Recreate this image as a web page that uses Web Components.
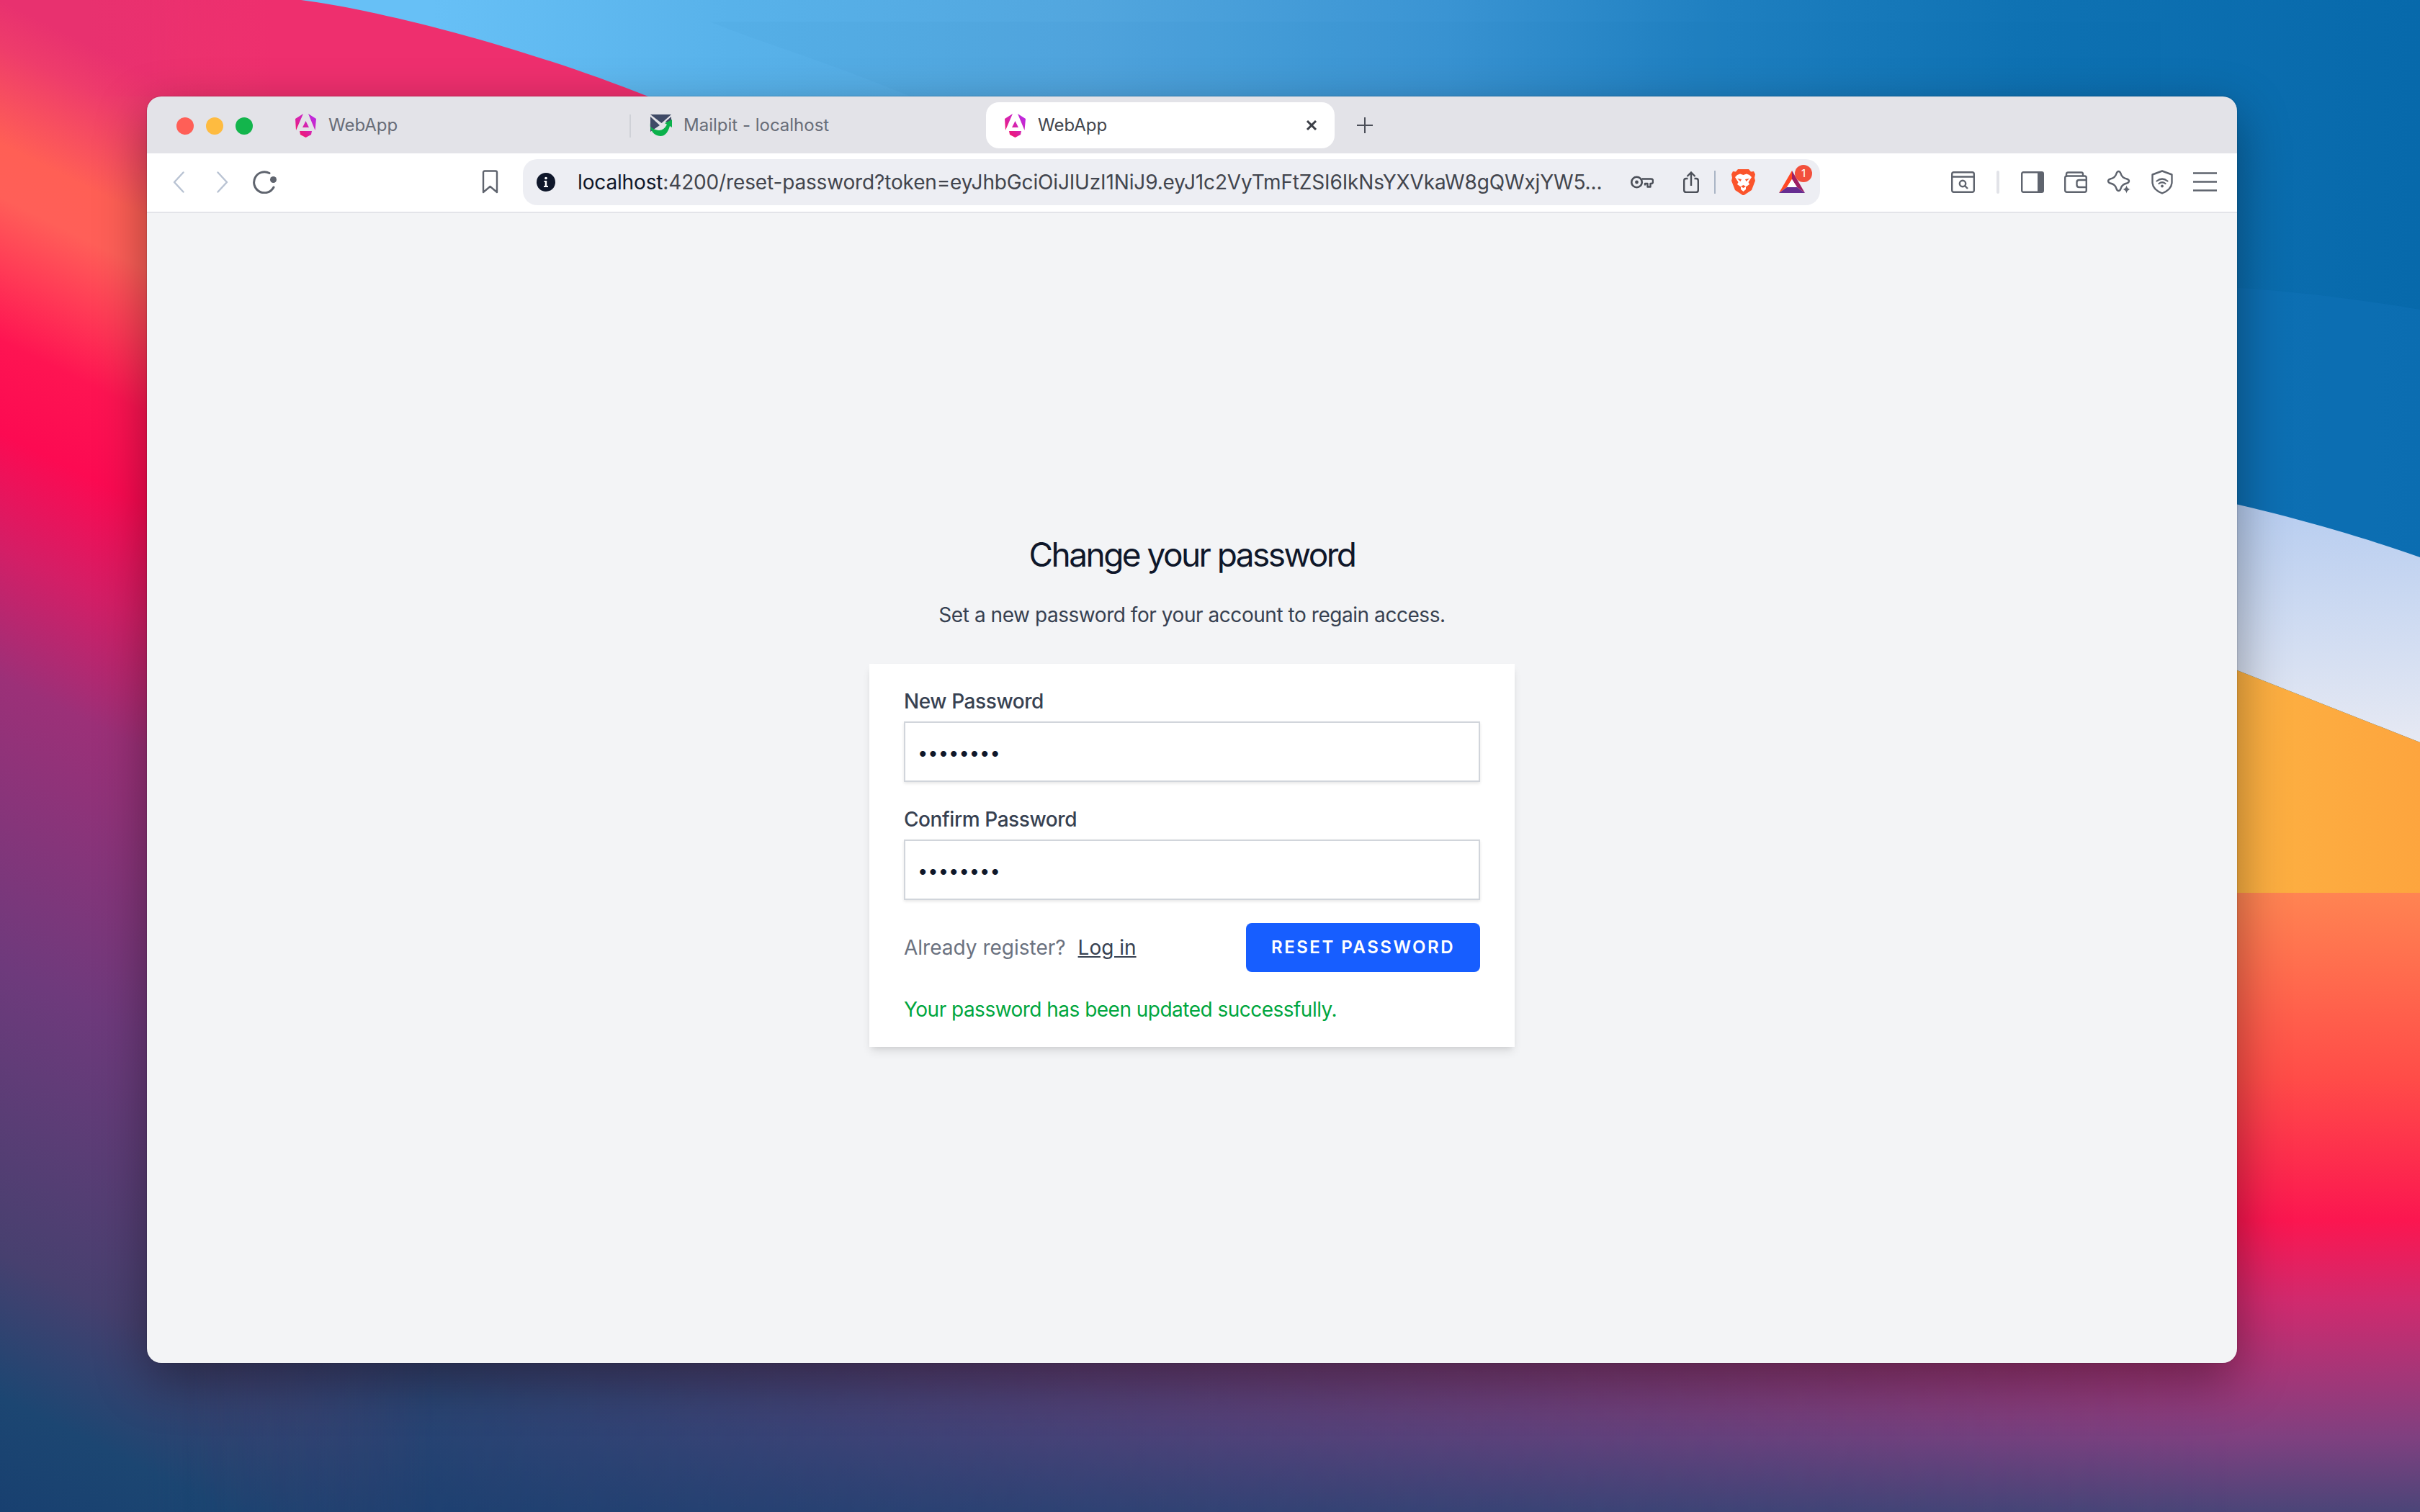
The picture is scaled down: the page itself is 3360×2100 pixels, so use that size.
<!doctype html>
<html lang="en">
<head>
<meta charset="utf-8">
<title>Change your password</title>
<style>
html, body { margin: 0; padding: 0; }
body { width: 3360px; height: 2100px; overflow: hidden; font-family: Inter, "Liberation Sans", sans-serif; }
</style>
</head>
<body>
<mac-desktop>
	<browser-window>
		<browser-tab slot="tabs" icon="angular" width="492">WebApp</browser-tab>
		<browser-tab slot="tabs" icon="mailpit" width="494" sep>Mailpit - localhost</browser-tab>
		<browser-tab slot="tabs" icon="angular" width="484" active>WebApp</browser-tab>
		<browser-toolbar slot="toolbar"><b>localhost</b>:4200/reset-password?token=eyJhbGciOiJIUzI1NiJ9.eyJ1c2VyTmFtZSI6IkNsYXVkaW8gQWxjYW5...</browser-toolbar>
		<reset-page>
			<reset-card>
				<pass-field label="New Password"></pass-field>
				<pass-field label="Confirm Password"></pass-field>
				<reset-actions></reset-actions>
				<span slot="status">Your password has been updated successfully.</span>
			</reset-card>
		</reset-page>
	</browser-window>
</mac-desktop>

<script>
const html = (strings, ...parts) => {
	const tpl = document.createElement('template')
	tpl.innerHTML = parts.reduce((out, value, i) => `${out}${strings[i]}${value}`, '') + strings[parts.length]
	return tpl
}

const stroke = '#5f646e'
const icons = {
	back: [16, 30, `<path d="M14.500 1.500 2 15l12.500 13.500" fill="none" stroke="#b9c3d3" stroke-width="2.400" stroke-linecap="round" stroke-linejoin="round"/>`],
	forward: [16, 30, `<path d="M1.500 1.500 14 15 1.500 28.500" fill="none" stroke="#b9c3d3" stroke-width="2.400" stroke-linecap="round" stroke-linejoin="round"/>`],
	reload: [34, 32, `<path d="M24 3.500A14.500 14.500 0 1 0 30 23" fill="none" stroke="${stroke}" stroke-width="3" stroke-linecap="round"/><circle cx="29.500" cy="12.500" r="4.500" fill="${stroke}"/>`],
	bookmark: [23, 33, `<path d="M2 3.500Q2 1.500 4 1.500H19Q21 1.500 21 3.500V31L11.500 23 2 31Z" fill="none" stroke="${stroke}" stroke-width="2.400" stroke-linejoin="round"/>`],
	info: [26, 26, `<circle cx="13" cy="13" r="13" fill="#0f172a"/><circle cx="13" cy="7.500" r="1.800" fill="#fff"/><path d="M10.500 11h3.700v7H16v2h-6v-2h1.700v-5h-1.200z" fill="#fff"/>`],
	key: [32, 18, `<circle cx="8.500" cy="9" r="7.200" fill="none" stroke="#4b4f58" stroke-width="2.600"/><circle cx="8.500" cy="9" r="2.400" fill="#4b4f58"/><path d="M15.500 4.500H28.500Q31 4.500 31 7V8.500Q31 11 28.500 11H27.500V15.500H23.500V11H20V13.500" fill="none" stroke="#4b4f58" stroke-width="2.400" stroke-linejoin="round"/>`],
	share: [22, 30, `<path d="M6.500 10H4Q1.200 10 1.200 13V26Q1.200 29 4 29H18Q20.800 29 20.800 26V13Q20.800 10 18 10H15.500" fill="none" stroke="#4b4f58" stroke-width="2.400"/><path d="M11 20V2M5.500 7 11 1.500 16.500 7" fill="none" stroke="#4b4f58" stroke-width="2.400"/>`],
	brave: [33, 36, `<path d="M9 0H24L27 3.500 31 3 33 7 32 12 33 16 28 29 17.500 36H15.500L5 29 0 16 1 12 0 7 2 3 6 3.500Z" fill="#fb542b"/><path d="M8 8 12 6.500 16.500 8 21 6.500 25 8 28 11 25.500 15 23.500 18 25 21 20 24.500 20 28 16.500 31 13 28 13 24.500 8 21 9.500 18 7.500 15 5 11Z" fill="#fff"/><path d="M8 13 14 14 12.500 17ZM25 13 19 14 20.500 17ZM13 24 16.500 22 20 24 16.500 26Z" fill="#fb542b"/>`],
	bat: [36, 31, `<path d="M18 0 0 31 11 23 18 12Z" fill="#ff4724"/><path d="M18 0 36 31 25 23 18 12Z" fill="#9e1f63"/><path d="M0 31H36L25 23H11Z" fill="#662d91"/><path d="M18 12 25 23H11Z" fill="#fff"/>`],
	reader: [33, 30, `<rect x="1.200" y="1.200" width="30.600" height="27.600" rx="2.500" fill="none" stroke="${stroke}" stroke-width="2.400"/><path d="M1.500 7.500H31.500" stroke="${stroke}" stroke-width="2.400"/><circle cx="16" cy="17" r="4.200" fill="none" stroke="${stroke}" stroke-width="2.400"/><path d="M19 20l4 4" stroke="${stroke}" stroke-width="2.400"/>`],
	sidebar: [32, 30, `<rect x="1.200" y="1.200" width="29.600" height="27.600" rx="2" fill="none" stroke="${stroke}" stroke-width="2.400"/><path d="M23 1.500H29Q31 1.500 31 3.500V26.500Q31 28.500 29 28.500H23Z" fill="${stroke}"/>`],
	wallet: [32, 30, `<path d="M3 8V4Q3 1.500 5.500 1.500H24Q26 1.500 26 4V6.500" fill="none" stroke="${stroke}" stroke-width="2.400"/><rect x="1.200" y="6.500" width="29.600" height="22.300" rx="2.500" fill="none" stroke="${stroke}" stroke-width="2.400"/><path d="M31 12H21Q17.500 12 17.500 15V19Q17.500 22 21 22H31" fill="none" stroke="${stroke}" stroke-width="2.400"/>`],
	sparkle: [32, 33, `<path d="M15.500 2Q17.500 2 18.500 5 20 11 27 12.500 30 13.500 30 15.500 30 17.500 27 18.500 20 20 18.500 26 17.500 29 15.500 29 13.500 29 12.500 26 11 20 4 18.500 1 17.500 1 15.500 1 13.500 4 12.500 11 11 12.500 5 13.500 2 15.500 2Z" fill="none" stroke="${stroke}" stroke-width="2.400" stroke-linejoin="round"/><path d="M26.500 21Q27.300 26 32 27 27.300 28 26.500 33 25.700 28 21 27 25.700 26 26.500 21Z" fill="${stroke}" stroke="#fff" stroke-width=".6"/>`],
	shield: [30, 34, `<path d="M15 1.500 28.500 6.500V17Q28.500 27 15 32.500 1.500 27 1.500 17V6.500Z" fill="none" stroke="${stroke}" stroke-width="2.400" stroke-linejoin="round"/><path d="M7.500 15.500Q15 9.500 22.500 15.500M10.500 19Q15 15.500 19.500 19" fill="none" stroke="${stroke}" stroke-width="2.200" stroke-linecap="round"/><circle cx="15" cy="22.500" r="1.900" fill="${stroke}"/>`],
	menu: [33, 27, `<path d="M0 1.500H33M0 13.500H33M0 25.500H33" stroke="${stroke}" stroke-width="2.600"/>`],
	angular: [31, 33, `<defs><linearGradient id="ng" x1="1" y1="0" x2="0" y2="1"><stop offset="0" stop-color="#b52bf0"/><stop offset=".55" stop-color="#d923a8"/><stop offset="1" stop-color="#ff0f4d"/></linearGradient></defs><path d="M12 0 1 7 2 23ZM19 0 30 7 28.500 23ZM15.500 10 11 19H20ZM7 24H24L23 29 15.500 33 8 29Z" fill="url(#ng)"/>`],
	mailpit: [33, 33, `<path d="M2 1H31L17.500 13Z" fill="#3f4a66"/><path d="M2 4 15 16 2 25ZM31 4V14L23 11Z" fill="#3f4a66"/><path d="M1 12Q2 30 16 31 25 31 29 17L32 19 32 8 22 13 25 15Q20 24 13 23 6 22 2 18Z" fill="#0bb14b"/>`]
}

const uiIcon = html`<style>
:host { display: inline-flex; flex: none; }
svg { display: block; }
</style><span id="box"></span>`

class UiIcon extends HTMLElement {
	static observedAttributes = ['name']

	constructor() {
		super()
		this.attachShadow({mode: 'open'}).append(uiIcon.content.cloneNode(true))
	}

	attributeChangedCallback(attr, old, name) {
		const [w, h, body] = icons[name]
		this.shadowRoot.getElementById('box').innerHTML = `<svg width="${w}" height="${h}" viewBox="0 0 ${w} ${h}">${body}</svg>`
	}
}
customElements.define('ui-icon', UiIcon)

const desktop = html`<style>
:host {
	display: flex;
	position: relative;
	box-sizing: border-box;
	width: 3360px;
	height: 2100px;
	padding: 134px 254px 207px 204px;
	overflow: hidden;
}
#wall { position: absolute; inset: 0; }
::slotted(*) { position: relative; }
</style>
<svg id="wall" width="3360" height="2100" viewBox="0 0 3360 2100">
	<defs>
		<linearGradient id="sunset" x1="0" y1="0" x2="0" y2="2100" gradientUnits="userSpaceOnUse">
			<stop offset="0" stop-color="#e8316f"/>
			<stop offset=".03" stop-color="#ee3c6b"/>
			<stop offset=".095" stop-color="#ff5f55"/>
			<stop offset=".13" stop-color="#ff5f58"/>
			<stop offset=".175" stop-color="#ff3c56"/>
			<stop offset=".225" stop-color="#fe1452"/>
			<stop offset=".286" stop-color="#fc0a52"/>
			<stop offset=".362" stop-color="#d41e66"/>
			<stop offset=".448" stop-color="#9c3078"/>
			<stop offset=".638" stop-color="#6e3a7c"/>
			<stop offset=".829" stop-color="#47406f"/>
			<stop offset=".924" stop-color="#1c4672"/>
			<stop offset="1" stop-color="#184070"/>
		</linearGradient>
		<linearGradient id="sunsetTilt" href="#sunset" x1="0" y1="0" x2="-840" y2="1680"/>
		<linearGradient id="stripFade" x1="204" y1="0" x2="600" y2="0" gradientUnits="userSpaceOnUse">
			<stop offset="0" stop-color="#fff"/>
			<stop offset="1" stop-color="#000"/>
		</linearGradient>
		<mask id="stripMask" maskUnits="userSpaceOnUse" x="0" y="0" width="3360" height="2100">
			<rect width="3360" height="2100" fill="url(#stripFade)"/>
		</mask>
		<linearGradient id="pink" x1="120" y1="0" x2="380" y2="0" gradientUnits="userSpaceOnUse">
			<stop offset="0" stop-color="#ee2f6e" stop-opacity="0"/>
			<stop offset="1" stop-color="#ee2f6e"/>
		</linearGradient>
		<linearGradient id="sky" x1="600" y1="0" x2="3360" y2="0" gradientUnits="userSpaceOnUse">
			<stop offset="0" stop-color="#67c0f6"/>
			<stop offset=".15" stop-color="#58b2ea"/>
			<stop offset=".33" stop-color="#52a6de"/>
			<stop offset=".51" stop-color="#3a94d3"/>
			<stop offset=".65" stop-color="#1e7fc0"/>
			<stop offset=".8" stop-color="#0f72b3"/>
			<stop offset="1" stop-color="#0769ab"/>
		</linearGradient>
		<linearGradient id="ice" x1="0" y1="700" x2="0" y2="1030" gradientUnits="userSpaceOnUse">
			<stop offset="0" stop-color="#b7cdf0"/>
			<stop offset="1" stop-color="#e6e9f3"/>
		</linearGradient>
		<linearGradient id="amber" x1="3106" y1="0" x2="3360" y2="0" gradientUnits="userSpaceOnUse">
			<stop offset="0" stop-color="#fdb142"/>
			<stop offset="1" stop-color="#fda53e"/>
		</linearGradient>
		<linearGradient id="ember" x1="0" y1="1240" x2="0" y2="2100" gradientUnits="userSpaceOnUse">
			<stop offset="0" stop-color="#ff8452"/>
			<stop offset=".3" stop-color="#ff4c48"/>
			<stop offset=".53" stop-color="#fb1650"/>
			<stop offset=".66" stop-color="#d02a6e"/>
			<stop offset=".88" stop-color="#7f4080"/>
			<stop offset="1" stop-color="#4b4578"/>
		</linearGradient>
		<linearGradient id="fadeRight" x1="250" y1="0" x2="3106" y2="0" gradientUnits="userSpaceOnUse">
			<stop offset="0" stop-color="#000"/>
			<stop offset="1" stop-color="#fff"/>
		</linearGradient>
		<mask id="emberMask" maskUnits="userSpaceOnUse" x="0" y="0" width="3360" height="2100">
			<rect width="3360" height="2100" fill="url(#fadeRight)"/>
		</mask>
	</defs>
	<rect width="3360" height="2100" fill="url(#sunset)"/>
	<rect width="600" height="2100" fill="url(#sunsetTilt)" mask="url(#stripMask)"/>
	<rect width="900" height="134" fill="url(#pink)"/>
	<path d="M418 0C540 16 740 70 900 134V1100H3360V0Z" fill="url(#sky)"/>
	<path d="M985 30C1060 60 1160 90 1264 134H3000V30Z" fill="#0a5c9c" opacity=".03"/>
	<path d="M3000 395C3150 398 3270 415 3360 430V800H3000Z" fill="#1072b8" opacity=".5"/>
	<path d="M3000 680C3100 695 3250 735 3360 774V1031L3000 889Z" fill="url(#ice)"/>
	<path d="M3000 889 3360 1031V1245L3000 1239Z" fill="url(#amber)"/>
	<rect x="204" y="1240" width="3156" height="860" fill="url(#ember)" mask="url(#emberMask)"/>
</svg>
<slot></slot>`

class MacDesktop extends HTMLElement {
	constructor() {
		super()
		this.attachShadow({mode: 'open'}).append(desktop.content.cloneNode(true))
	}
}
customElements.define('mac-desktop', MacDesktop)

const browserWindow = html`<style>
:host {
	display: flex;
	flex: 1;
	flex-direction: column;
	min-width: 0;
	border-radius: 20px;
	overflow: hidden;
	box-shadow: 0 24px 70px rgba(0, 0, 0, .38), 0 0 2px rgba(0, 0, 0, .3);
}
header {
	display: flex;
	align-items: flex-start;
	flex: none;
	box-sizing: border-box;
	height: 79px;
	padding: 8px 0 0 41px;
	background: #e3e3e8;
}
#lights {
	display: flex;
	gap: 17px;
	margin: 21px 32px 0 0;
}
#lights i { width: 24px; height: 24px; border-radius: 50%; }
#plus { margin: 18px 0 0 28px; width: 28px; height: 28px; }
</style>
<header>
	<div id="lights">
		<i style="background:#ff5f57"></i><i style="background:#febb40"></i><i style="background:#13b54c"></i>
	</div>
	<slot name="tabs"></slot>
	<svg id="plus" viewBox="0 0 28 28"><path d="M14 3V25M3 14H25" stroke="#4b4f58" stroke-width="2"/></svg>
</header>
<slot name="toolbar"></slot>
<slot></slot>`

class BrowserWindow extends HTMLElement {
	constructor() {
		super()
		this.attachShadow({mode: 'open'}).append(browserWindow.content.cloneNode(true))
	}
}
customElements.define('browser-window', BrowserWindow)

const tab = html`<style>
:host {
	display: flex;
	align-items: center;
	position: relative;
	flex: none;
	box-sizing: border-box;
	height: 64px;
	padding-left: 26px;
	font: 400 24px/1 Inter, "Liberation Sans", sans-serif;
	color: #686d78;
	gap: 16px;
}
:host([active]) {
	padding-left: 25px;
	background: #fff;
	border-radius: 18px;
	color: #43464e;
}
:host([sep]) { gap: 15px; }
:host([sep])::before {
	content: '';
	position: absolute;
	left: -1px;
	top: 17px;
	width: 2px;
	height: 32px;
	background: #cfd1d7;
}
#close {
	display: none;
	position: absolute;
	right: 24px;
	top: 25px;
}
:host([active]) #close { display: block; }
</style>
<ui-icon id="icon"></ui-icon>
<slot></slot>
<svg id="close" width="16" height="14" viewBox="0 0 16 14"><path d="M2 1 14 13M14 1 2 13" stroke="#3c3f47" stroke-width="3"/></svg>`

class BrowserTab extends HTMLElement {
	constructor() {
		super()
		this.attachShadow({mode: 'open'}).append(tab.content.cloneNode(true))
	}

	connectedCallback() {
		this.shadowRoot.getElementById('icon').setAttribute('name', this.getAttribute('icon'))
		this.style.width = `${this.getAttribute('width')}px`
	}
}
customElements.define('browser-tab', BrowserTab)

const toolbar = html`<style>
:host {
	display: flex;
	align-items: center;
	flex: none;
	box-sizing: border-box;
	height: 83px;
	padding: 0 28px 2px 36px;
	background: #fff;
	border-bottom: 2px solid #e3e4e9;
}
#forward { margin-left: 45px; }
#reload { margin-left: 33px; }
#bookmark { margin-left: 285px; }
#url {
	display: flex;
	align-items: center;
	flex: none;
	box-sizing: border-box;
	width: 1801px;
	height: 64px;
	margin-left: 34px;
	padding: 0 21px 0 19px;
	border-radius: 20px;
	background: #edeef3;
}
#text {
	flex: 1;
	min-width: 0;
	margin-left: 31px;
	padding-top: 2px;
	white-space: nowrap;
	overflow: hidden;
	font: 400 28px/1.2 Inter, "Liberation Sans", sans-serif;
	letter-spacing: -.15px;
	color: #42454d;
}
::slotted(b) { font-weight: 400; color: #0f172a; }
#key { margin-left: 30px; }
#share { margin-left: 41px; }
.bar { flex: none; width: 2px; height: 32px; margin-left: 21px; background: #aab5c5; }
#brave { margin-left: 22px; }
#badge-wrap { position: relative; display: flex; margin-left: 33px; }
#badge {
	position: absolute;
	top: -8px;
	right: -10px;
	box-sizing: border-box;
	width: 24px;
	height: 24px;
	border-radius: 50%;
	background: #f2503c;
	color: #fff;
	font: 400 15px/24px Inter, "Liberation Sans", sans-serif;
	text-align: center;
}
#reader { margin-left: 182px; }
#split { flex: none; width: 4px; height: 32px; margin: 0 30px; border-radius: 2px; background: #e2e3e8; }
#wallet, #sparkle { margin-left: 28px; }
#shield { margin-left: 29px; }
#menu { margin-left: 28px; }
</style>
<ui-icon name="back"></ui-icon>
<ui-icon id="forward" name="forward"></ui-icon>
<ui-icon id="reload" name="reload"></ui-icon>
<ui-icon id="bookmark" name="bookmark"></ui-icon>
<div id="url">
	<ui-icon name="info"></ui-icon>
	<div id="text"><slot></slot></div>
	<ui-icon id="key" name="key"></ui-icon>
	<ui-icon id="share" name="share"></ui-icon>
	<div class="bar"></div>
	<ui-icon id="brave" name="brave"></ui-icon>
	<div id="badge-wrap"><ui-icon name="bat"></ui-icon><div id="badge">1</div></div>
</div>
<ui-icon id="reader" name="reader"></ui-icon>
<div id="split"></div>
<ui-icon name="sidebar"></ui-icon>
<ui-icon id="wallet" name="wallet"></ui-icon>
<ui-icon id="sparkle" name="sparkle"></ui-icon>
<ui-icon id="shield" name="shield"></ui-icon>
<ui-icon id="menu" name="menu"></ui-icon>`

class BrowserToolbar extends HTMLElement {
	constructor() {
		super()
		this.attachShadow({mode: 'open'}).append(toolbar.content.cloneNode(true))
	}
}
customElements.define('browser-toolbar', BrowserToolbar)

const page = html`<style>
:host {
	display: flex;
	flex: 1;
	flex-direction: column;
	align-items: center;
	justify-content: center;
	padding-top: 3px;
	background: #f3f4f6;
	font-family: Inter, "Liberation Sans", sans-serif;
}
h1 {
	margin: 0;
	font-size: 46px;
	line-height: 64px;
	font-weight: 400;
	letter-spacing: -2.550px;
	color: #0f172a;
}
p {
	margin: 32px 0 48px;
	font-size: 28px;
	line-height: 40px;
	letter-spacing: -.45px;
	color: #374151;
}
</style>
<h1>Change your password</h1>
<p>Set a new password for your account to regain access.</p>
<slot></slot>`

class ResetPage extends HTMLElement {
	constructor() {
		super()
		this.attachShadow({mode: 'open'}).append(page.content.cloneNode(true))
	}
}
customElements.define('reset-page', ResetPage)

const card = html`<style>
:host {
	display: flex;
	flex-direction: column;
	gap: 32px;
	box-sizing: border-box;
	width: 896px;
	padding: 32px 48px;
	background: #fff;
	box-shadow: 0 8px 12px -2px rgba(0, 0, 0, .1), 0 4px 8px -4px rgba(0, 0, 0, .1);
}
#status {
	font-size: 28px;
	line-height: 40px;
	letter-spacing: -.52px;
	color: #00a63e;
}
</style>
<slot></slot>
<div id="status"><slot name="status"></slot></div>`

class ResetCard extends HTMLElement {
	constructor() {
		super()
		this.attachShadow({mode: 'open'}).append(card.content.cloneNode(true))
	}
}
customElements.define('reset-card', ResetCard)

const field = html`<style>
:host { display: block; }
label {
	display: block;
	margin-bottom: 8px;
	font-size: 28px;
	line-height: 40px;
	font-weight: 500;
	letter-spacing: -.42px;
	color: #374151;
}
input {
	display: block;
	box-sizing: border-box;
	width: 100%;
	height: 84px;
	padding: 0 17px;
	border: 2px solid #d1d5db;
	border-radius: 0;
	outline: none;
	background: #fff;
	box-shadow: 0 2px 4px rgba(0, 0, 0, .1);
	font: 400 25.500px Inter, "Liberation Sans", sans-serif;
	color: #0f172a;
}
</style>
<label for="box"></label>
<input id="box" type="password" value="password">`

class PassField extends HTMLElement {
	constructor() {
		super()
		this.attachShadow({mode: 'open'}).append(field.content.cloneNode(true))
	}

	connectedCallback() {
		this.shadowRoot.querySelector('label').textContent = this.getAttribute('label')
	}
}
customElements.define('pass-field', PassField)

const actions = html`<style>
:host {
	display: flex;
	align-items: center;
	justify-content: space-between;
}
span {
	font-size: 28px;
	line-height: 40px;
	color: #6b7280;
}
a {
	margin-left: 17px;
	color: #374151;
	text-decoration: underline;
}
button {
	width: 325px;
	height: 68px;
	padding: 0;
	border: 0;
	border-radius: 8px;
	background: #175eff;
	color: #fff;
	font: 600 24px/1 Inter, "Liberation Sans", sans-serif;
	letter-spacing: .105em;
}
</style>
<span>Already register?<a href="#">Log in</a></span>
<button type="button">RESET PASSWORD</button>`

class ResetActions extends HTMLElement {
	constructor() {
		super()
		this.attachShadow({mode: 'open'}).append(actions.content.cloneNode(true))
	}
}
customElements.define('reset-actions', ResetActions)
</script>
</body>
</html>
